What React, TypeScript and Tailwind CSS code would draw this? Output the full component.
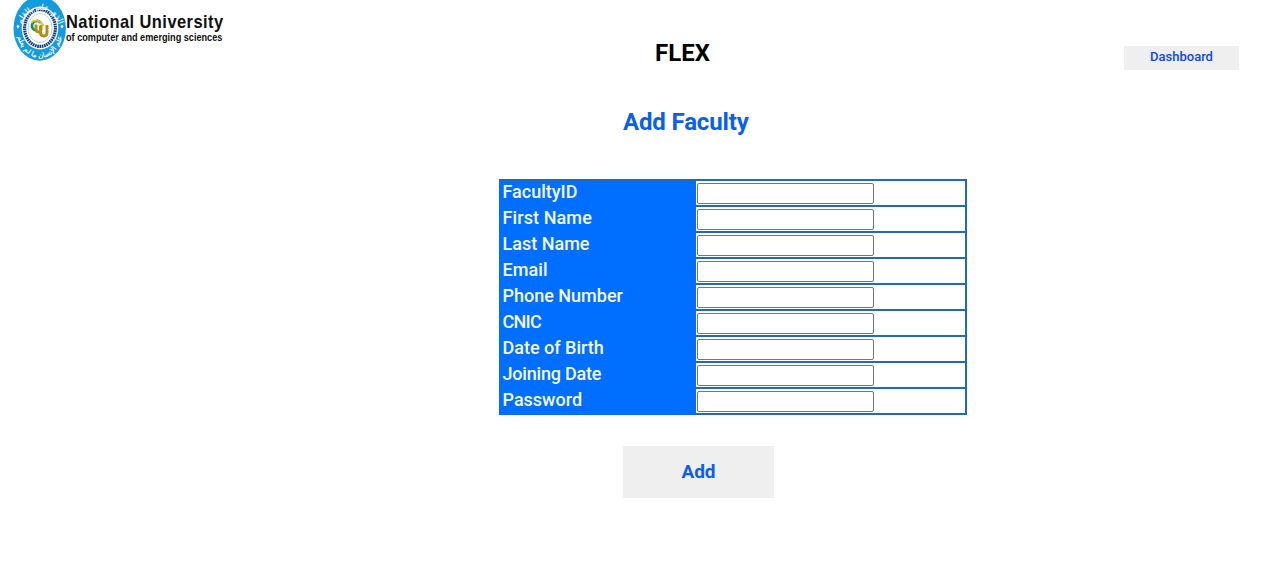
const fields = [
  { label: "FacultyID", tracking: "tracking-[0px]" },
  { label: "First Name", tracking: "tracking-[0.1px]" },
  { label: "Last Name", tracking: "tracking-[0px]" },
  { label: "Email", tracking: "tracking-[0.1px]" },
  { label: "Phone Number", tracking: "tracking-[0px]" },
  { label: "CNIC", tracking: "tracking-[-0.7px]" },
  { label: "Date of Birth", tracking: "tracking-[0px]" },
  { label: "Joining Date", tracking: "tracking-[-0.2px]" },
  { label: "Password", tracking: "tracking-[0px]" },
];

function Seal() {
  return (
    <svg className="block h-[62px] w-[54px] shrink-0" viewBox="0 0 54 62" aria-hidden="true">
      <defs>
        <path id="outer-top" d="M7 33 A19.8 23.2 0 1 1 47 33" />
        <path id="outer-bottom" d="M3.6 28.5 A23.2 29.3 0 0 0 50 28.5" />
      </defs>
      <ellipse cx="26.7" cy="28.5" rx="26.2" ry="32.2" fill="#149bdd" />
      <ellipse cx="27" cy="28" rx="18.3" ry="21.5" fill="#fff" />
      <ellipse cx="27" cy="28" rx="15.4" ry="18.4" fill="none" stroke="#153d87" strokeWidth="3.2" strokeDasharray="1.7 0.6" />
      <ellipse cx="27" cy="28" rx="12" ry="14.5" fill="#fff" stroke="#6ca5d0" strokeWidth="0.5" />
      <g fill="#fff" stroke="#fff" strokeWidth="0.15" fontFamily="DejaVu Sans, sans-serif">
        <text textAnchor="middle" fontSize="7.8"><textPath href="#outer-top" startOffset="50%">الذي علم بالقلم</textPath></text>
        <text textAnchor="middle" fontSize="7"><textPath href="#outer-bottom" startOffset="50%">علم الإنسان ما لم يعلم</textPath></text>
      </g>
      <path d="M5 24.5l1.5 2L5 28.5l-1.5-2ZM49 24.5l1.5 2-1.5 2-1.5-2Z" fill="#fff" />
      <path d="M28 23c-3-4-9.5-1.5-9 3.5.3 3 3 4 5.5 3.5" fill="none" stroke="#07945b" strokeWidth="2.6" />
      <path d="M23 24.5v4.8c0 3.5 5 3.5 5 0v-4.5M27.5 26v6.5c0 4.5 6.5 4.5 6.5 0V25" fill="none" stroke="#b09016" strokeWidth="3" />
      <path d="M18.5 22.5c2-2.5 7-2.5 9-.3l3.5 3.5" fill="none" stroke="#f0c020" strokeWidth="1.8" />
    </svg>
  );
}

export default function App() {
  return (
    <main className="flex h-[574px] w-[1281px] flex-col overflow-hidden bg-white font-['Roboto',sans-serif]">
      <header className="flex h-[76px] items-start pl-[13px]">
        <div className="flex w-[642px] items-start">
          <Seal />
          <div className="-ml-px whitespace-nowrap pt-[12px] font-['Liberation_Sans',sans-serif] font-bold text-[#111]">
            <div className="h-[19px] origin-left scale-x-[0.89] text-[18.5px] leading-[20px] tracking-[0.5px]">National University</div>
            <div className="origin-left scale-x-[0.87] text-[10.5px] leading-[12px]">of computer and emerging sciences</div>
          </div>
        </div>
        <h1 className="w-[469px] pt-[38px] text-[24px] leading-[30px] font-bold text-black">FLEX</h1>
        <button className="mt-[46px] h-[24px] w-[115px] bg-[#efefef] pb-[3px] text-[13px] leading-[20px] font-medium text-[#084bea]">Dashboard</button>
      </header>
      <h2 className="ml-[623px] mt-[31px] h-[30px] text-[24px] leading-[30px] font-bold tracking-[-0.15px] text-[#0b5fec]">Add Faculty</h2>
      <form className="mt-[42px]">
        <div className="ml-[499px] w-[468px] border-t-2 border-[#1f69c0]">
          {fields.map(({ label, tracking }) => (
            <label key={label} className="flex h-[26px] border-r-2 border-b-2 border-[#1f69c0] bg-white">
              <span className={`-mb-[2px] h-[26px] w-[197px] shrink-0 bg-[#006fff] pl-[3.5px] text-[18px] leading-[22px] font-medium text-[#f4f9ff] ${tracking}`}>{label}</span>
              <input name={label} className="mt-[2px] ml-px h-[21px] w-[177px] rounded-[2px] border border-[#767676] bg-white px-px text-[13px] outline-none" />
            </label>
          ))}
        </div>
        <button type="button" className="ml-[623px] mt-[31px] h-[52px] w-[151px] bg-[#efefef] text-[19px] leading-[24px] font-bold text-[#0b5fec]">Add</button>
      </form>
    </main>
  );
}
